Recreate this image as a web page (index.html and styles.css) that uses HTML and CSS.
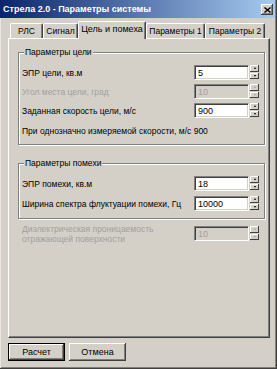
FILE: index.html
```html
<!DOCTYPE html>
<html lang="ru">
<head>
  <meta charset="UTF-8">
  <title>Стрела 2.0 - Параметры системы</title>
  <link rel="stylesheet" href="styles.css">
</head>
<body>
  <div class="window">
    <div class="titlebar">
      <span class="title">Стрела 2.0 - Параметры системы</span>
      <span class="close-btn">
        <svg width="7" height="6" viewBox="0 0 7 6"><path d="M0.5 0.5 L6.5 5.5 M6.5 0.5 L0.5 5.5" stroke="#000" stroke-width="1.4"/></svg>
      </span>
    </div>

    <div class="client">
      <div class="tabs">
        <div class="tab t1">РЛС</div>
        <div class="tab t2">Сигнал</div>
        <div class="tab active t3">Цель и помеха</div>
        <div class="tab t4">Параметры 1</div>
        <div class="tab t5">Параметры 2</div>
      </div>

      <div class="panel">
        <fieldset class="group g1">
          <legend>Параметры цели</legend>
          <div class="row">
            <span class="label">ЭПР цели, кв.м</span>
            <div class="spin-edit"><span class="edit">5</span><span class="spin"><i class="up"></i><i class="down"></i></span></div>
          </div>
          <div class="row disabled">
            <span class="label">Угол места цели, град</span>
            <div class="spin-edit"><span class="edit">10</span><span class="spin"><i class="up"></i><i class="down"></i></span></div>
          </div>
          <div class="row">
            <span class="label">Заданная скорость цели, м/с</span>
            <div class="spin-edit"><span class="edit">900</span><span class="spin"><i class="up"></i><i class="down"></i></span></div>
          </div>
          <div class="note">При однозначно измеряемой скорости, м/с 900</div>
        </fieldset>

        <fieldset class="group g2">
          <legend>Параметры помехи</legend>
          <div class="row">
            <span class="label">ЭПР помехи, кв.м</span>
            <div class="spin-edit"><span class="edit">18</span><span class="spin"><i class="up"></i><i class="down"></i></span></div>
          </div>
          <div class="row">
            <span class="label">Ширина спектра флуктуации помехи, Гц</span>
            <div class="spin-edit"><span class="edit">10000</span><span class="spin"><i class="up"></i><i class="down"></i></span></div>
          </div>
        </fieldset>

        <div class="row free disabled">
          <span class="label two-line">Диэлектрическая проницаемость<br>отражающей поверхности</span>
          <div class="spin-edit"><span class="edit">10</span><span class="spin"><i class="up"></i><i class="down"></i></span></div>
        </div>
      </div>

      <div class="buttons">
        <div class="btn default">Расчет</div>
        <div class="btn">Отмена</div>
      </div>
    </div>
  </div>
</body>
</html>
```

FILE: styles.css
```css
body {
  margin: 0;
  background: #d4d0c8;
  font-family: "Liberation Sans", Arial, sans-serif;
  font-size: 8.5px;
  color: #000;
}
.window {
  width: 277px;
  height: 369px;
  box-sizing: border-box;
  background: #d4d0c8;
  box-shadow: inset -1px -1px #404040, inset 1px 0 #e8e6e2, inset -2px -2px #808080;
  overflow: hidden;
}
.titlebar {
  height: 18px;
  width: 275px;
  display: flex;
  align-items: center;
  justify-content: space-between;
  background: linear-gradient(to right, #0a246a, #a6caf0);
  box-sizing: border-box;
  padding: 0 2px 0 3px;
}
.title {
  color: #fff;
  font-weight: bold;
  font-size: 9px;
}
.close-btn {
  width: 12px;
  height: 11px;
  box-sizing: border-box;
  background: #d4d0c8;
  display: flex;
  align-items: center;
  justify-content: center;
  box-shadow: inset -1px -1px #404040, inset 1px 1px #fff, inset -2px -2px #808080;
  margin-top: 1px;
}
.client {
  padding: 3px 0 0 8px;
}
.tabs {
  display: flex;
  align-items: flex-end;
  height: 17px;
  padding-left: 2px;
  position: relative;
  z-index: 1;
}
.tab {
  height: 15px;
  box-sizing: border-box;
  text-align: center;
  line-height: 14px;
  border-top: 1px solid #fff;
  border-left: 1px solid #fff;
  border-right: 1px solid #404040;
  box-shadow: inset -1px 0 #808080;
  border-radius: 2px 2px 0 0;
  background: #d4d0c8;
}
.t1 { width: 33px; }
.t2 { width: 35px; }
.t3 { width: 68px; }
.t4 { width: 59px; }
.t5 { width: 60px; }
.tab.active {
  height: 18px;
  margin-bottom: -1px;
  line-height: 15px;
  font-size: 9px;
}
.panel {
  width: 262px;
  height: 300px;
  box-sizing: border-box;
  border-top: 1px solid #fff;
  border-left: 1px solid #fff;
  border-right: 1px solid #404040;
  border-bottom: 1px solid #404040;
  box-shadow: inset -1px -1px #808080;
  padding: 8px 4px 0 9px;
}
.group {
  margin: 0;
  border: 1px solid #808080;
  box-shadow: inset 1px 1px #fff, 1px 1px #fff;
  padding: 8px 5px 8px 3px;
}
.group legend {
  padding: 0 1px;
  margin-left: 2px;
  line-height: 10px;
  background: #d4d0c8;
}
.g2 {
  margin-top: 13px;
  padding-bottom: 7px;
}
.row {
  display: flex;
  align-items: center;
  justify-content: space-between;
  height: 15px;
}
.row + .row {
  margin-top: 4px;
}
.g2 .row + .row {
  margin-top: 5px;
}
.row.free {
  margin-top: 7px;
  padding: 0 6px 0 4px;
}
.label.two-line {
  line-height: 10px;
}
.disabled .label {
  color: #a0a0a0;
}
.note {
  margin-top: 8px;
  line-height: 10px;
}
.spin-edit {
  display: flex;
  height: 15px;
}
.edit {
  width: 55px;
  height: 15px;
  box-sizing: border-box;
  background: #fff;
  border-top: 1px solid #808080;
  border-left: 1px solid #808080;
  border-right: 1px solid #fff;
  border-bottom: 1px solid #fff;
  box-shadow: inset 1px 1px #404040, inset -1px -1px #d4d0c8;
  padding: 1px 0 0 3px;
  line-height: 12px;
  font-size: 9px;
}
.disabled .edit {
  background: #d4d0c8;
  color: #a0a0a0;
}
.spin {
  display: flex;
  flex-direction: column;
  margin-left: 1px;
  width: 9px;
}
.spin i {
  height: 7px;
  margin-bottom: 1px;
  box-sizing: border-box;
  background: #d4d0c8;
  box-shadow: inset -1px -1px #404040, inset 1px 1px #fff;
  display: flex;
  align-items: center;
  justify-content: center;
}
.spin i::after {
  content: "";
  border-left: 1.5px solid transparent;
  border-right: 1.5px solid transparent;
}
.spin .up::after {
  border-bottom: 2px solid #000;
}
.spin .down::after {
  border-top: 2px solid #000;
}
.disabled .spin .up::after {
  border-bottom-color: #a0a0a0;
}
.disabled .spin .down::after {
  border-top-color: #a0a0a0;
}
.buttons {
  display: flex;
  gap: 4px;
  margin-top: 5px;
}
.btn {
  width: 57px;
  height: 18px;
  box-sizing: border-box;
  text-align: center;
  line-height: 18px;
  font-size: 9px;
  box-shadow: inset -1px -1px #404040, inset 1px 1px #fff, inset -2px -2px #808080;
}
.btn.default {
  border: 1px solid #000;
  line-height: 16px;
  box-shadow: inset -1px -1px #404040, inset 1px 1px #fff, inset -2px -2px #808080;
}
```
